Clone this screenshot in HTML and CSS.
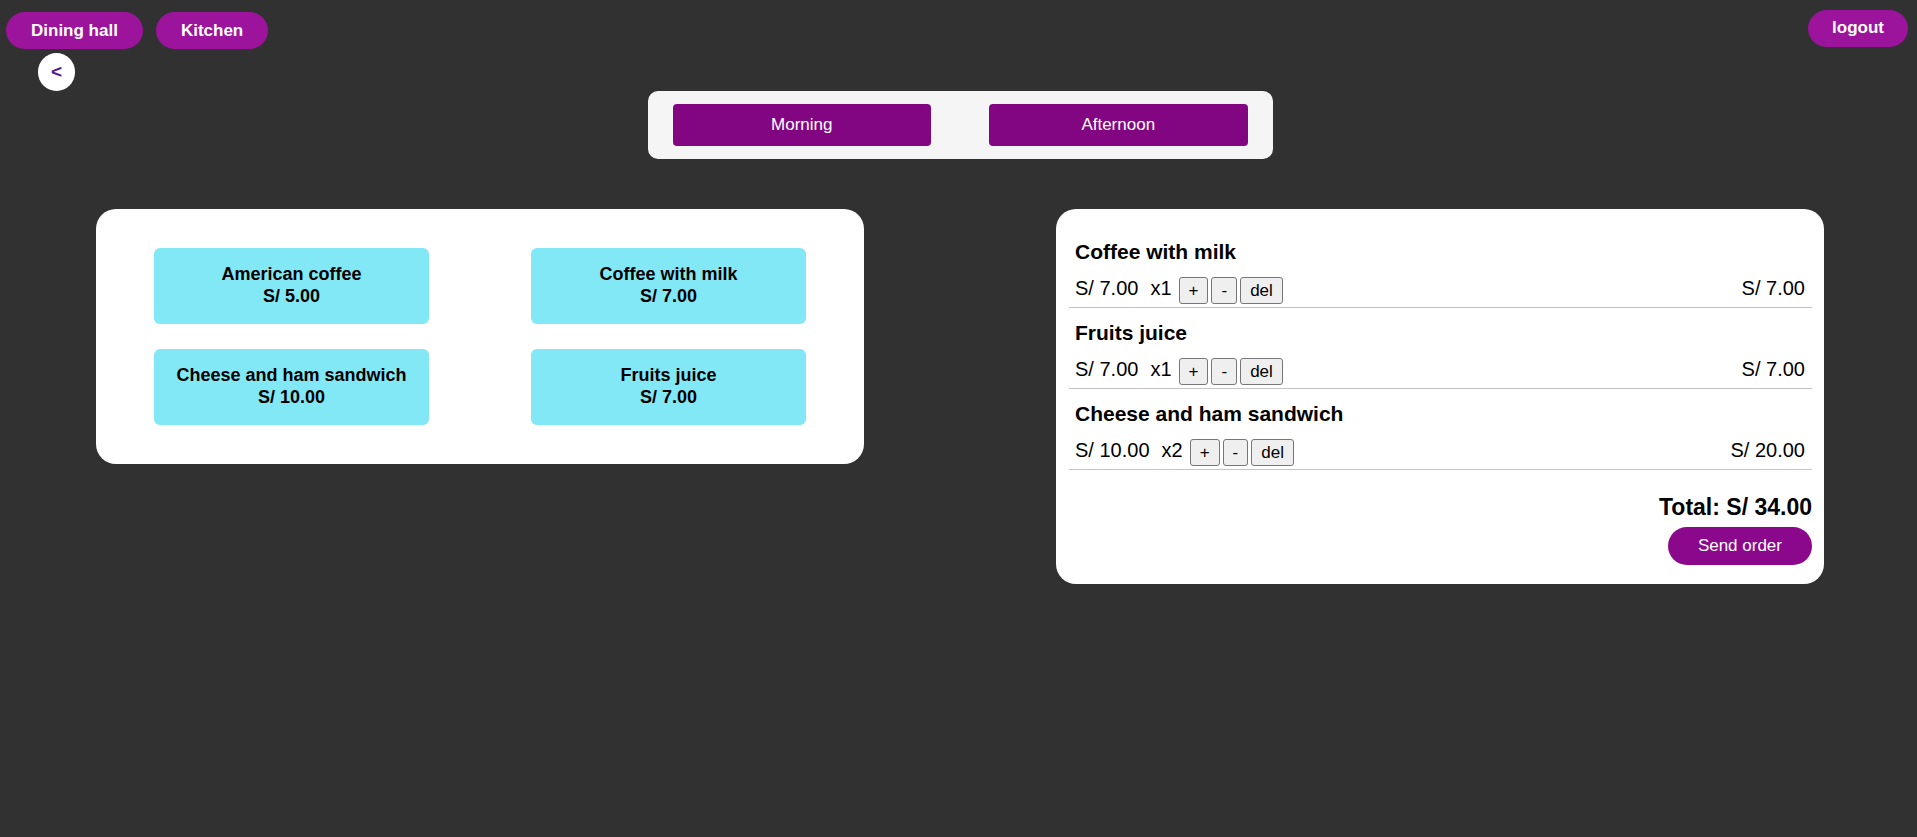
FILE: index.html
```html
<!DOCTYPE html>
<html lang="en">
<head>
<meta charset="utf-8">
<meta name="viewport" content="width=device-width, initial-scale=1">
<title>Dining hall</title>
<link rel="stylesheet" href="styles.css">
</head>
<body>
<header class="header">
  <nav class="nav">
    <a class="pill" href="#dining">Dining hall</a>
    <a class="pill" href="#kitchen">Kitchen</a>
  </nav>
  <button class="pill pill-logout" type="button">logout</button>
</header>
<a class="back" href="#back" aria-label="Back">&lt;</a>
<main class="content">
  <div class="picker">
    <button class="picker-button" type="button">Morning</button>
    <button class="picker-button" type="button">Afternoon</button>
  </div>
  <div class="panels">
    <section class="card menu" aria-label="Menu">
      <button class="product" type="button">American coffee<br>S/ 5.00</button>
      <button class="product" type="button">Coffee with milk<br>S/ 7.00</button>
      <button class="product" type="button">Cheese and ham sandwich<br>S/ 10.00</button>
      <button class="product" type="button">Fruits juice<br>S/ 7.00</button>
    </section>
    <section class="card order" aria-label="Order">
      <article class="item">
        <h3 class="item-name">Coffee with milk</h3>
        <div class="item-row">
          <span class="item-price">S/ 7.00</span>
          <span class="item-count">x1</span>
          <div class="item-actions">
            <button class="small-button" type="button">+</button>
            <button class="small-button" type="button">-</button>
            <button class="small-button" type="button">del</button>
          </div>
          <span class="item-total">S/ 7.00</span>
        </div>
      </article>
      <article class="item">
        <h3 class="item-name">Fruits juice</h3>
        <div class="item-row">
          <span class="item-price">S/ 7.00</span>
          <span class="item-count">x1</span>
          <div class="item-actions">
            <button class="small-button" type="button">+</button>
            <button class="small-button" type="button">-</button>
            <button class="small-button" type="button">del</button>
          </div>
          <span class="item-total">S/ 7.00</span>
        </div>
      </article>
      <article class="item">
        <h3 class="item-name">Cheese and ham sandwich</h3>
        <div class="item-row">
          <span class="item-price">S/ 10.00</span>
          <span class="item-count">x2</span>
          <div class="item-actions">
            <button class="small-button" type="button">+</button>
            <button class="small-button" type="button">-</button>
            <button class="small-button" type="button">del</button>
          </div>
          <span class="item-total">S/ 20.00</span>
        </div>
      </article>
      <p class="total">Total: S/ 34.00</p>
      <button class="send" type="button">Send order</button>
    </section>
  </div>
</main>
</body>
</html>
```
FILE: styles.css
```css
* {
  box-sizing: border-box;
}

body {
  margin: 0;
  min-height: 100vh;
  background: #313131;
  color: #000;
  font-family: "Liberation Sans", Arial, sans-serif;
}

button {
  font-family: inherit;
  cursor: pointer;
}

.header {
  display: flex;
  justify-content: space-between;
  align-items: flex-start;
  padding: 10px 9px 0 6px;
}

.nav {
  display: flex;
  gap: 13px;
  padding-top: 2px;
}

.pill {
  padding: 9px 25px;
  border: 0;
  border-radius: 19px;
  background: #9c139c;
  color: #fff;
  font-size: 17px;
  font-weight: bold;
  line-height: 19px;
  text-decoration: none;
}

.pill-logout {
  padding: 8px 24px 10px;
}

.back {
  display: flex;
  align-items: center;
  justify-content: center;
  width: 37px;
  height: 38px;
  margin: 4px 0 0 38px;
  border-radius: 19px;
  background: #fff;
  color: #551a8b;
  font-size: 19px;
  font-weight: bold;
  text-decoration: none;
}

.content {
  padding-left: 3px;
}

.picker {
  display: grid;
  grid-template-columns: 1fr 1fr;
  gap: 58px;
  width: 625px;
  max-width: 90%;
  margin: 0 auto;
  padding: 13px 25px;
  border-radius: 10px;
  background: #f5f5f5;
}

.picker-button {
  padding: 11px 0;
  border: 0;
  border-radius: 4px;
  background: #820682;
  color: #fff;
  font-size: 17px;
  line-height: 20px;
}

.panels {
  display: grid;
  grid-template-columns: 1fr 1fr;
  align-items: start;
  gap: 10%;
  margin-top: 50px;
  padding: 0 93px;
  column-gap: 192px;
}

.card {
  border-radius: 20px;
  background: #fff;
}

.menu {
  display: grid;
  grid-template-columns: 1fr 1fr;
  gap: 25px 102px;
  padding: 39px 58px;
}

.product {
  padding: 15px 0 17px;
  border: 0;
  border-radius: 6px;
  background: #82e8f5;
  color: #000;
  font-size: 18px;
  font-weight: bold;
  line-height: 22px;
}

.order {
  display: flex;
  flex-direction: column;
  padding: 18px 12px 19px 13px;
}

.item {
  padding: 13px 7px 3px 6px;
  border-bottom: 1px solid #c4c4c4;
}

.item-name {
  margin: 0;
  font-size: 21px;
  line-height: 24px;
}

.item-row {
  display: flex;
  align-items: flex-start;
  margin-top: 13px;
  font-size: 20px;
  line-height: 23px;
}

.item-count {
  margin: 0 7px 0 12px;
}

.item-actions {
  display: flex;
  gap: 3px;
}

.small-button {
  padding: 3px 9px;
  border: 1px solid #767676;
  border-radius: 3px;
  background: #efefef;
  color: #000;
  font-size: 17px;
  line-height: 19px;
}

.item-total {
  margin-left: auto;
}

.total {
  margin: 24px 0 6px;
  font-size: 23px;
  font-weight: bold;
  line-height: 27px;
  text-align: right;
}

.send {
  align-self: flex-end;
  padding: 9px 30px;
  border: 0;
  border-radius: 19px;
  background: #8b078b;
  color: #fff;
  font-size: 17px;
  line-height: 20px;
}
```
